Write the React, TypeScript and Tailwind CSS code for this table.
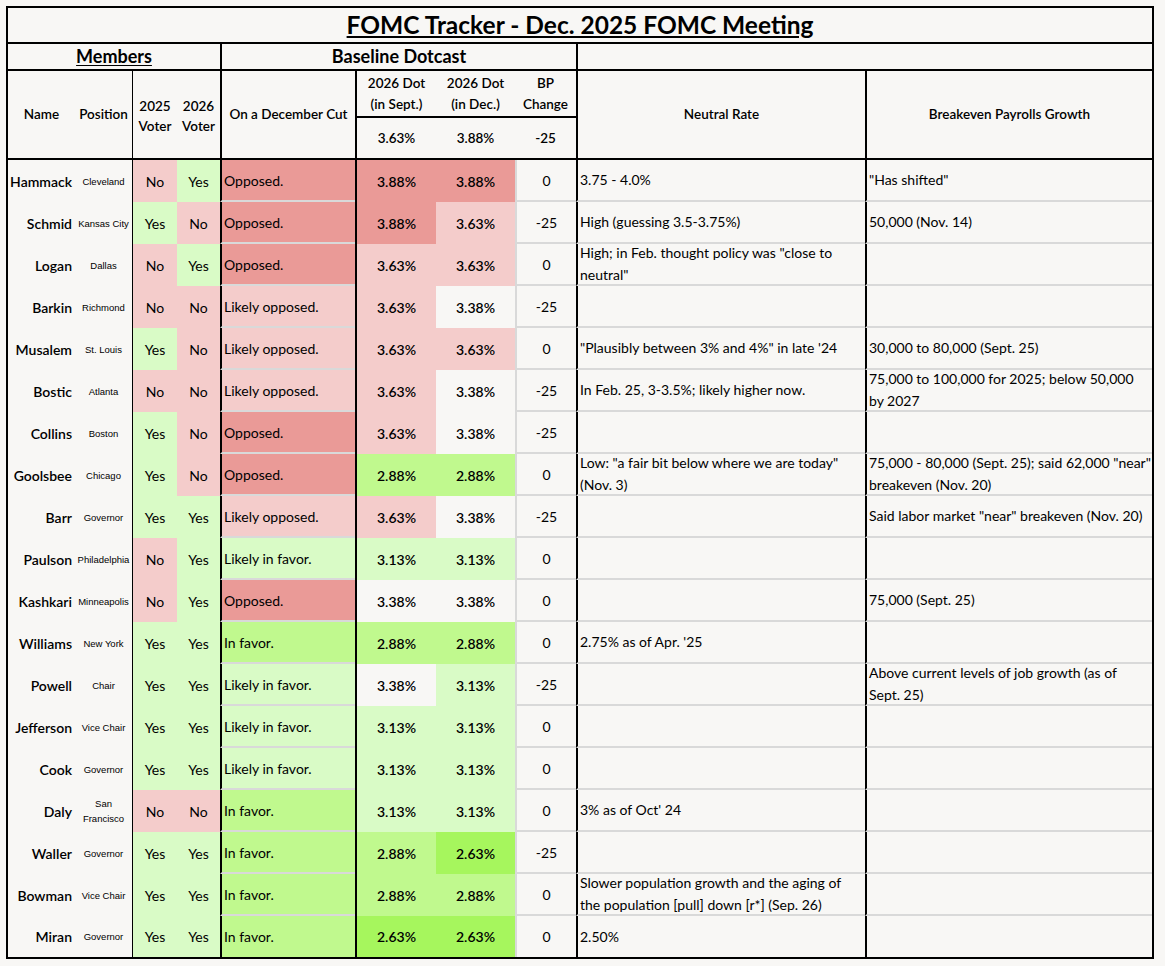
import React from "react";

type Tone = "red" | "pink" | "none" | "lg" | "mg" | "bg";

/* ---------- colour scale, same fills as the sheet's conditional formats ---------- */

const TONE: Record<Tone, string> = {
  red: "bg-[#ea9a97]",
  pink: "bg-[#f4cccb]",
  none: "",
  lg: "bg-[#d9fbc6]",
  mg: "bg-[#c0f98e]",
  bg: "bg-[#a6f65d]",
};

const DOT_TONE: Record<string, Tone> = {
  "3.88%": "red",
  "3.63%": "pink",
  "3.38%": "none",
  "3.13%": "lg",
  "2.88%": "mg",
  "2.63%": "bg",
};

const CUT_TONE: Record<string, Tone> = {
  "Opposed.": "red",
  "Likely opposed.": "pink",
  "Likely in favor.": "lg",
  "In favor.": "mg",
};

type Member = {
  name: string;
  pos: string[];
  v25: "Yes" | "No";
  v26: "Yes" | "No";
  cut: string;
  sept: string;
  dec: string;
  bp: string;
  neutral: string[];
  payrolls: string[];
};

const MEMBERS: Member[] = [
  { name: "Hammack", pos: ["Cleveland"], v25: "No", v26: "Yes", cut: "Opposed.", sept: "3.88%", dec: "3.88%", bp: "0", neutral: ["3.75 - 4.0%"], payrolls: ['"Has shifted"'] },
  { name: "Schmid", pos: ["Kansas City"], v25: "Yes", v26: "No", cut: "Opposed.", sept: "3.88%", dec: "3.63%", bp: "-25", neutral: ["High (guessing 3.5-3.75%)"], payrolls: ["50,000 (Nov. 14)"] },
  { name: "Logan", pos: ["Dallas"], v25: "No", v26: "Yes", cut: "Opposed.", sept: "3.63%", dec: "3.63%", bp: "0", neutral: ['High; in Feb. thought policy was "close to', 'neutral"'], payrolls: [] },
  { name: "Barkin", pos: ["Richmond"], v25: "No", v26: "No", cut: "Likely opposed.", sept: "3.63%", dec: "3.38%", bp: "-25", neutral: [], payrolls: [] },
  { name: "Musalem", pos: ["St. Louis"], v25: "Yes", v26: "No", cut: "Likely opposed.", sept: "3.63%", dec: "3.63%", bp: "0", neutral: ['"Plausibly between 3% and 4%" in late \'24'], payrolls: ["30,000 to 80,000 (Sept. 25)"] },
  { name: "Bostic", pos: ["Atlanta"], v25: "No", v26: "No", cut: "Likely opposed.", sept: "3.63%", dec: "3.38%", bp: "-25", neutral: ["In Feb. 25, 3-3.5%; likely higher now."], payrolls: ["75,000 to 100,000 for 2025; below 50,000", "by 2027"] },
  { name: "Collins", pos: ["Boston"], v25: "Yes", v26: "No", cut: "Opposed.", sept: "3.63%", dec: "3.38%", bp: "-25", neutral: [], payrolls: [] },
  { name: "Goolsbee", pos: ["Chicago"], v25: "Yes", v26: "No", cut: "Opposed.", sept: "2.88%", dec: "2.88%", bp: "0", neutral: ['Low: "a fair bit below where we are today"', "(Nov. 3)"], payrolls: ['75,000 - 80,000 (Sept. 25); said 62,000 "near"', "breakeven (Nov. 20)"] },
  { name: "Barr", pos: ["Governor"], v25: "Yes", v26: "Yes", cut: "Likely opposed.", sept: "3.63%", dec: "3.38%", bp: "-25", neutral: [], payrolls: ['Said labor market "near" breakeven (Nov. 20)'] },
  { name: "Paulson", pos: ["Philadelphia"], v25: "No", v26: "Yes", cut: "Likely in favor.", sept: "3.13%", dec: "3.13%", bp: "0", neutral: [], payrolls: [] },
  { name: "Kashkari", pos: ["Minneapolis"], v25: "No", v26: "Yes", cut: "Opposed.", sept: "3.38%", dec: "3.38%", bp: "0", neutral: [], payrolls: ["75,000 (Sept. 25)"] },
  { name: "Williams", pos: ["New York"], v25: "Yes", v26: "Yes", cut: "In favor.", sept: "2.88%", dec: "2.88%", bp: "0", neutral: ["2.75% as of Apr. '25"], payrolls: [] },
  { name: "Powell", pos: ["Chair"], v25: "Yes", v26: "Yes", cut: "Likely in favor.", sept: "3.38%", dec: "3.13%", bp: "-25", neutral: [], payrolls: ["Above current levels of job growth (as of", "Sept. 25)"] },
  { name: "Jefferson", pos: ["Vice Chair"], v25: "Yes", v26: "Yes", cut: "Likely in favor.", sept: "3.13%", dec: "3.13%", bp: "0", neutral: [], payrolls: [] },
  { name: "Cook", pos: ["Governor"], v25: "Yes", v26: "Yes", cut: "Likely in favor.", sept: "3.13%", dec: "3.13%", bp: "0", neutral: [], payrolls: [] },
  { name: "Daly", pos: ["San", "Francisco"], v25: "No", v26: "No", cut: "In favor.", sept: "3.13%", dec: "3.13%", bp: "0", neutral: ["3% as of Oct' 24"], payrolls: [] },
  { name: "Waller", pos: ["Governor"], v25: "Yes", v26: "Yes", cut: "In favor.", sept: "2.88%", dec: "2.63%", bp: "-25", neutral: [], payrolls: [] },
  { name: "Bowman", pos: ["Vice Chair"], v25: "Yes", v26: "Yes", cut: "In favor.", sept: "2.88%", dec: "2.88%", bp: "0", neutral: ["Slower population growth and the aging of", "the population [pull] down [r*] (Sep. 26)"], payrolls: [] },
  { name: "Miran", pos: ["Governor"], v25: "Yes", v26: "Yes", cut: "In favor.", sept: "2.63%", dec: "2.63%", bp: "0", neutral: ["2.50%"], payrolls: [] },
];

function Lines({ lines }: { lines: string[] }) {
  return (
    <div className="leading-[22px] whitespace-nowrap">
      {lines.map((l, i) => (
        <div key={i}>{l}</div>
      ))}
    </div>
  );
}

function MemberRow({ m, last }: { m: Member; last: boolean }) {
  // light grey gridline only on the columns that carry it in the sheet
  const grid = last ? "" : "border-b-2 border-b-[#d9d9d9]";
  return (
    <>
      <div className="flex items-center justify-end pr-[3px] text-[14px] font-semibold">
        {m.name}
      </div>
      <div className="flex flex-col items-center justify-center text-center font-['Liberation_Sans',sans-serif] text-[9.5px] leading-[15px]">
        {m.pos.map((p) => (
          <span key={p}>{p}</span>
        ))}
      </div>
      <div className={`flex items-center justify-center border-l border-l-black ${TONE[m.v25 === "Yes" ? "lg" : "pink"]}`}>
        {m.v25}
      </div>
      <div className={`flex items-center justify-center ${TONE[m.v26 === "Yes" ? "lg" : "pink"]}`}>
        {m.v26}
      </div>
      <div className={`flex items-center border-l-2 border-l-black pl-[2px] ${grid} ${TONE[CUT_TONE[m.cut]]}`}>
        {m.cut}
      </div>
      <div className={`flex items-center justify-center border-l-2 border-l-black font-semibold ${TONE[DOT_TONE[m.sept]]}`}>
        {m.sept}
      </div>
      <div className={`flex items-center justify-center font-semibold ${TONE[DOT_TONE[m.dec]]}`}>
        {m.dec}
      </div>
      <div className={`flex items-center justify-center border-l-2 border-l-[#d9d9d9] ${grid}`}>
        {m.bp}
      </div>
      <div className={`flex items-center border-l-2 border-l-black pl-[2px] ${grid}`}>
        <Lines lines={m.neutral} />
      </div>
      <div className={`flex items-center border-l-2 border-l-black pl-[2px] ${grid}`}>
        <Lines lines={m.payrolls} />
      </div>
    </>
  );
}

export default function App() {
  return (
    <div className="min-h-screen bg-[#f8f7f5] p-[6px] font-['Lato',sans-serif] text-[14px] text-black">
      <div className="grid w-[1148px] grid-cols-[67px_57px_45px_43px_135px_81px_79px_61px_289px_287px] grid-rows-[36px_27px_47px_42px_repeat(18,42px)_41px] border-2 border-black">
        {/* Title */}
        <div className="col-span-10 flex items-center justify-center border-b-2 border-black text-[24.5px] font-bold underline underline-offset-2">
          FOMC Tracker - Dec. 2025 FOMC Meeting
        </div>

        {/* Group headers */}
        <div className="col-span-4 flex items-center justify-center border-b-2 border-black text-[18px] font-bold underline underline-offset-2">
          Members
        </div>
        <div className="col-span-4 flex items-center justify-center border-b-2 border-l-2 border-black text-[18px] font-bold">
          Baseline Dotcast
        </div>
        <div className="col-span-2 border-b-2 border-l-2 border-black" />

        {/* Column headers */}
        <div className="row-span-2 flex items-center justify-center border-b-2 border-black text-[13.5px] font-semibold">
          Name
        </div>
        <div className="row-span-2 flex items-center justify-center border-b-2 border-black text-[13.5px] font-semibold">
          Position
        </div>
        <div className="row-span-2 flex flex-col items-center justify-center border-b-2 border-l border-black pt-[2px] text-[13.5px] font-semibold leading-[20px]">
          <span>2025</span>
          <span>Voter</span>
        </div>
        <div className="row-span-2 flex flex-col items-center justify-center border-b-2 border-black pt-[2px] text-[13.5px] font-semibold leading-[20px]">
          <span>2026</span>
          <span>Voter</span>
        </div>
        <div className="row-span-2 flex items-center justify-center border-b-2 border-l-2 border-black text-[13.5px] font-semibold">
          On a December Cut
        </div>
        <div className="flex flex-col items-center justify-center border-b-2 border-l-2 border-black text-[13.5px] font-semibold leading-[21px]">
          <span>2026 Dot</span>
          <span>(in Sept.)</span>
        </div>
        <div className="flex flex-col items-center justify-center border-b-2 border-black text-[13.5px] font-semibold leading-[21px]">
          <span>2026 Dot</span>
          <span>(in Dec.)</span>
        </div>
        <div className="flex flex-col items-center justify-center border-b-2 border-black text-[13.5px] font-semibold leading-[21px]">
          <span>BP</span>
          <span>Change</span>
        </div>
        <div className="row-span-2 flex items-center justify-center border-b-2 border-l-2 border-black text-[13.5px] font-semibold">
          Neutral Rate
        </div>
        <div className="row-span-2 flex items-center justify-center border-b-2 border-l-2 border-black text-[13.5px] font-semibold">
          Breakeven Payrolls Growth
        </div>
        <div className="flex items-center justify-center border-b-2 border-l-2 border-black text-[13.5px] font-semibold">
          3.63%
        </div>
        <div className="flex items-center justify-center border-b-2 border-black text-[13.5px] font-semibold">
          3.88%
        </div>
        <div className="flex items-center justify-center border-b-2 border-black text-[13.5px] font-semibold">
          -25
        </div>

        {/* Members */}
        {MEMBERS.map((m, i) => (
          <MemberRow key={m.name} m={m} last={i === MEMBERS.length - 1} />
        ))}
      </div>
    </div>
  );
}
